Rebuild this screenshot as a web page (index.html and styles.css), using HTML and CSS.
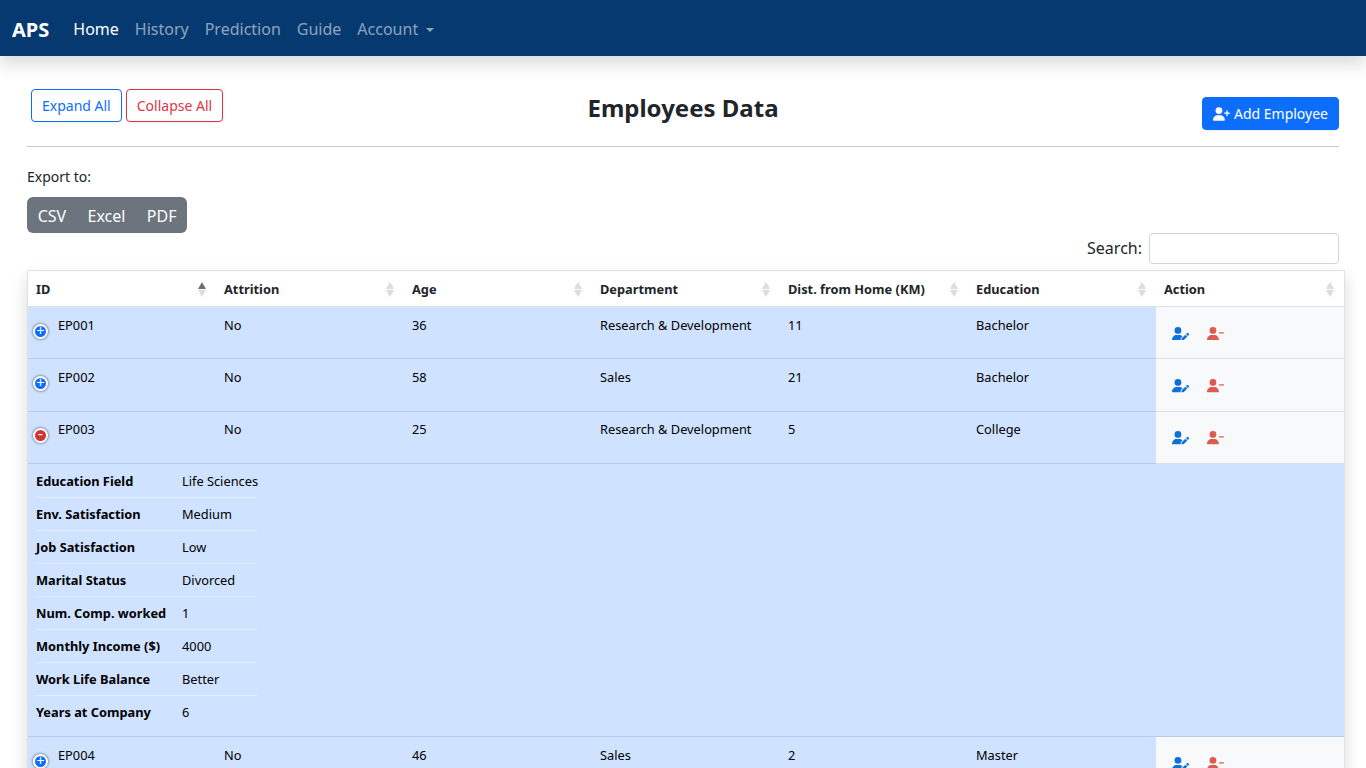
FILE: index.html
```html
<!DOCTYPE html>
<html lang="en">
<head>
    <meta charset="UTF-8">
    <meta name="viewport" content="width=device-width, initial-scale=1.0">
    <title>Employees Data</title>
    <link rel="stylesheet" href="styles.css">
</head>
<body>
    <svg class="icon-defs" aria-hidden="true">
        <symbol id="user-plus" viewBox="0 0 640 512"><path d="M96 128a128 128 0 1 1 256 0A128 128 0 1 1 96 128zM0 482.3C0 383.8 79.8 304 178.3 304h91.4C368.2 304 448 383.8 448 482.3c0 16.4-13.3 29.7-29.7 29.7H29.7C13.3 512 0 498.7 0 482.3zM504 312V248H440c-13.3 0-24-10.7-24-24s10.7-24 24-24h64V136c0-13.3 10.7-24 24-24s24 10.7 24 24v64h64c13.3 0 24 10.7 24 24s-10.7 24-24 24H552v64c0 13.3-10.7 24-24 24s-24-10.7-24-24z"/></symbol>
        <symbol id="user-minus" viewBox="0 0 640 512"><path d="M96 128a128 128 0 1 1 256 0A128 128 0 1 1 96 128zM0 482.3C0 383.8 79.8 304 178.3 304h91.4C368.2 304 448 383.8 448 482.3c0 16.4-13.3 29.7-29.7 29.7H29.7C13.3 512 0 498.7 0 482.3zM472 200H616c13.3 0 24 10.7 24 24s-10.7 24-24 24H472c-13.3 0-24-10.7-24-24s10.7-24 24-24z"/></symbol>
        <symbol id="user-pen" viewBox="0 0 640 512"><path d="M224 256A128 128 0 1 0 224 0a128 128 0 1 0 0 256zm-45.7 48C79.8 304 0 383.8 0 482.3C0 498.7 13.3 512 29.7 512H322.8c-3.1-8.8-3.7-18.4-1.4-27.8l15-60.1c2.8-11.3 8.6-21.5 16.8-29.7l40.3-40.3c-32.1-31-75.7-50.1-123.9-50.1H178.3zm435.5-68.3c-15.6-15.6-40.9-15.6-56.6 0l-29.4 29.4 71 71 29.4-29.4c15.6-15.6 15.6-40.9 0-56.6l-14.4-14.4zM375.9 417c-4.1 4.1-7 9.2-8.4 14.9l-15 60.1c-1.4 5.5 .2 11.2 4.2 15.2s9.7 5.6 15.2 4.2l60.1-15c5.6-1.4 10.8-4.3 14.9-8.4L576.1 358.7l-71-71L375.9 417z"/></symbol>
    </svg>

    <nav class="navbar">
        <a class="brand" href="#">APS</a>
        <a class="nav-link active" href="#">Home</a>
        <a class="nav-link" href="#">History</a>
        <a class="nav-link" href="#">Prediction</a>
        <a class="nav-link" href="#">Guide</a>
        <a class="nav-link dropdown" href="#">Account</a>
    </nav>

    <main class="content">
        <div class="page-head">
            <div class="head-left">
                <button class="btn btn-outline-blue">Expand All</button>
                <button class="btn btn-outline-red">Collapse All</button>
            </div>
            <h1>Employees Data</h1>
            <div class="head-right">
                <button class="btn btn-blue"><svg class="icon-add"><use href="#user-plus"/></svg> Add Employee</button>
            </div>
        </div>
        <hr>

        <p class="export-label">Export to:</p>
        <div class="export-group">
            <button>CSV</button>
            <button>Excel</button>
            <button>PDF</button>
        </div>

        <div class="search-row">
            <label for="search">Search:</label>
            <input type="text" id="search">
        </div>

        <table class="data-table">
            <thead>
                <tr>
                    <th class="sorted">ID</th>
                    <th>Attrition</th>
                    <th>Age</th>
                    <th>Department</th>
                    <th>Dist. from Home (KM)</th>
                    <th>Education</th>
                    <th>Action</th>
                </tr>
            </thead>
            <tbody>
                <tr>
                    <td><div class="id-cell"><span class="control">+</span>EP001</div></td>
                    <td>No</td>
                    <td>36</td>
                    <td>Research &amp; Development</td>
                    <td>11</td>
                    <td>Bachelor</td>
                    <td class="action"><svg class="edit"><use href="#user-pen"/></svg><svg class="remove"><use href="#user-minus"/></svg></td>
                </tr>
                <tr>
                    <td><div class="id-cell"><span class="control">+</span>EP002</div></td>
                    <td>No</td>
                    <td>58</td>
                    <td>Sales</td>
                    <td>21</td>
                    <td>Bachelor</td>
                    <td class="action"><svg class="edit"><use href="#user-pen"/></svg><svg class="remove"><use href="#user-minus"/></svg></td>
                </tr>
                <tr>
                    <td><div class="id-cell"><span class="control open">-</span>EP003</div></td>
                    <td>No</td>
                    <td>25</td>
                    <td>Research &amp; Development</td>
                    <td>5</td>
                    <td>College</td>
                    <td class="action"><svg class="edit"><use href="#user-pen"/></svg><svg class="remove"><use href="#user-minus"/></svg></td>
                </tr>
                <tr class="details">
                    <td colspan="7">
                        <table class="details-table">
                            <tr><th>Education Field</th><td>Life Sciences</td></tr>
                            <tr><th>Env. Satisfaction</th><td>Medium</td></tr>
                            <tr><th>Job Satisfaction</th><td>Low</td></tr>
                            <tr><th>Marital Status</th><td>Divorced</td></tr>
                            <tr><th>Num. Comp. worked</th><td>1</td></tr>
                            <tr><th>Monthly Income ($)</th><td>4000</td></tr>
                            <tr><th>Work Life Balance</th><td>Better</td></tr>
                            <tr><th>Years at Company</th><td>6</td></tr>
                        </table>
                    </td>
                </tr>
                <tr>
                    <td><div class="id-cell"><span class="control">+</span>EP004</div></td>
                    <td>No</td>
                    <td>46</td>
                    <td>Sales</td>
                    <td>2</td>
                    <td>Master</td>
                    <td class="action"><svg class="edit"><use href="#user-pen"/></svg><svg class="remove"><use href="#user-minus"/></svg></td>
                </tr>
            </tbody>
        </table>
    </main>
</body>
</html>
```
FILE: styles.css
```css
html {
    height: 100%;
    overflow: hidden;
}
body {
    margin: 0;
    font-family: "Noto Sans", sans-serif;
    font-size: 16px;
    color: #212529;
    background-color: #fff;
}
.icon-defs {
    display: none;
}

/* Navbar */
.navbar {
    display: flex;
    align-items: center;
    box-sizing: border-box;
    height: 56px;
    padding: 2px 12px 0;
    background-color: #063970;
    box-shadow: 0 8px 16px rgba(0, 0, 0, 0.15);
}
.brand {
    margin-right: 16px;
    font-size: 20px;
    font-weight: 700;
    color: #fff;
    text-decoration: none;
}
.nav-link {
    padding: 8px;
    color: rgba(255, 255, 255, 0.55);
    text-decoration: none;
}
.nav-link.active {
    color: #fff;
}
.dropdown::after {
    content: "";
    display: inline-block;
    margin-left: 8px;
    vertical-align: 3px;
    border-top: 4.8px solid;
    border-right: 4.8px solid transparent;
    border-left: 4.8px solid transparent;
}

/* Page head */
.content {
    padding: 0 27px;
}
.page-head {
    display: grid;
    grid-template-columns: 1fr auto 1fr;
    height: 90px;
}
.head-left {
    display: flex;
    gap: 4px;
    align-items: flex-start;
    padding: 33px 0 0 4px;
}
.head-right {
    display: flex;
    justify-content: flex-end;
    align-items: flex-start;
    padding-top: 41px;
}
h1 {
    margin: 35px 0 0;
    font-size: 24px;
    line-height: 34px;
    font-weight: 700;
}
hr {
    margin: 0;
    border: 0;
    border-top: 1px solid #c8c8c9;
}
.btn {
    height: 33px;
    padding: 0 10px;
    font-family: inherit;
    font-size: 14px;
    background-color: #fff;
    border: 1px solid;
    border-radius: 4px;
    box-shadow: 0 1px 2px rgba(0, 0, 0, 0.075);
    cursor: pointer;
}
.btn-outline-blue {
    color: #0d6efd;
    border-color: #0d6efd;
}
.btn-outline-red {
    color: #dc3545;
    border-color: #dc3545;
}
.btn-blue {
    display: flex;
    align-items: center;
    gap: 4px;
    font-size: 14px;
    color: #fff;
    background-color: #0d6efd;
    border-color: #0d6efd;
}
.icon-add {
    width: 17px;
    height: 14px;
    fill: #fff;
}

/* Export buttons */
.export-label {
    margin: 19px 0 0;
    font-size: 14px;
    line-height: 21px;
}
.export-group {
    display: inline-flex;
    margin-top: 10px;
    background-color: #6c757d;
    border-radius: 6px;
    vertical-align: top;
}
.export-group button {
    height: 36px;
    padding: 2px 10.7px 0;
    font-family: inherit;
    font-size: 16px;
    color: #fff;
    background: none;
    border: 0;
}

/* Search */
.search-row {
    display: flex;
    justify-content: flex-end;
    align-items: center;
    gap: 7px;
    height: 31px;
}
.search-row label {
    margin-top: -2px;
}
.search-row input {
    box-sizing: border-box;
    width: 190px;
    height: 31px;
    border: 1px solid #ced4da;
    border-radius: 4px;
}

/* Table */
.data-table {
    box-sizing: border-box;
    width: 1318px;
    margin-top: 6px;
    table-layout: fixed;
    border-collapse: separate;
    border-spacing: 0;
    border: 1px solid #dee2e6;
    font-size: 12.8px;
    color: #000;
    background-color: #fff;
    box-shadow: 0 8px 16px rgba(0, 0, 0, 0.15);
}
.data-table > thead th {
    position: relative;
    height: 35px;
    padding: 0 8px;
    text-align: left;
    font-weight: 700;
    color: #212529;
    border-bottom: 1px solid #dee2e6;
}
.data-table > thead th::before,
.data-table > thead th::after {
    content: "";
    position: absolute;
    right: 10px;
    border-right: 4px solid transparent;
    border-left: 4px solid transparent;
}
.data-table > thead th::before {
    top: 11px;
    border-bottom: 7px solid #dcdcdc;
}
.data-table > thead th::after {
    top: 19px;
    border-top: 7px solid #dcdcdc;
}
.data-table > thead th.sorted::before {
    border-bottom-color: #6c6f75;
}
.data-table > tbody > tr > td {
    height: 35.4px;
    padding: 8.6px 8px 7.4px;
    line-height: 19.5px;
    vertical-align: top;
    background-color: #cfe2ff;
    border-bottom: 1px solid #bacbe6;
}
.data-table > tbody > tr > td.action {
    background-color: #f8f9fa;
    border-bottom-color: #dfe0e1;
    padding-left: 16px;
}
.id-cell {
    display: flex;
    gap: 10px;
}
.control {
    box-sizing: border-box;
    flex: none;
    width: 15px;
    height: 15px;
    margin: 8px 0 0 -3px;
    font-family: "Liberation Mono", monospace;
    font-size: 14px;
    line-height: 11px;
    text-align: center;
    color: #fff;
    background-color: #0d6efd;
    border: 2px solid #fff;
    border-radius: 50%;
    box-shadow: 0 0 3px #444;
}
.control.open {
    background-color: #d33333;
}
.action svg {
    display: inline-block;
    width: 17px;
    height: 13.6px;
    margin-top: 11px;
}
.edit {
    fill: #0d6fd8;
    margin-right: 18px;
}
.remove {
    fill: #dc5a50;
}

/* Expanded details */
.data-table > tbody > tr.details > td {
    padding: 0 8px 8px;
}
.details-table {
    border-collapse: collapse;
    font-size: 12.8px;
}
.details-table th,
.details-table td {
    box-sizing: border-box;
    height: 33px;
    padding: 2px 0 0;
    text-align: left;
    white-space: nowrap;
    border-bottom: 1px solid #e4edfb;
}
.details-table tr:last-child th,
.details-table tr:last-child td {
    border-bottom: 0;
}
.details-table th {
    width: 146px;
    font-weight: 700;
}
.details-table td {
    width: 76px;
}
```
